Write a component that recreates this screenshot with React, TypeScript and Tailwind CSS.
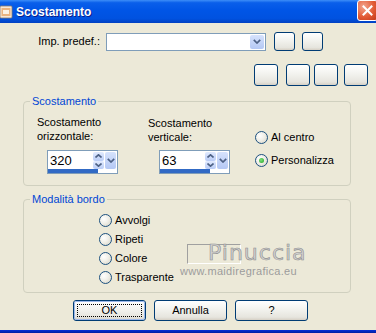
import React from 'react';

const font = { fontFamily: '"Liberation Sans", Arial, sans-serif' };

// XP style push button
const XpButton = ({ className = '', children = null, isDefault = false }: { className?: string; children?: React.ReactNode; isDefault?: boolean }) => (
  <div
    className={`flex items-center justify-center rounded-[3px] border border-[#003C74] bg-[linear-gradient(to_bottom,#FFFFFF_0%,#F4F4F0_40%,#E6E5DE_85%,#D6D0C5_100%)] text-[11px] text-black ${className}`}
  >
    {isDefault ? (
      <div className="flex h-full w-full items-center justify-center rounded-[2px] border border-[#9DB9EB]">
        <div className="flex h-[calc(100%-4px)] w-[calc(100%-4px)] items-center justify-center border border-dotted border-black">
          {children}
        </div>
      </div>
    ) : (
      children
    )}
  </div>
);

const Radio = ({ label, checked = false }: { label: string; checked?: boolean }) => (
  <div className="flex items-center gap-[3px] h-[13px]">
    <div className="flex h-[13px] w-[13px] items-center justify-center rounded-full border border-[#1C5180] bg-[radial-gradient(circle_at_35%_35%,#FFFFFF_0%,#F0EFE8_45%,#D4D1C2_100%)]">
      {checked && <div className="h-[5px] w-[5px] rounded-full bg-[radial-gradient(circle_at_40%_40%,#7BE27B,#21A121)]" />}
    </div>
    <span className="text-[11px] leading-[13px] text-black">{label}</span>
  </div>
);

const SpinArrows = () => (
  <div className="flex h-full">
    <div className="flex w-[11px] flex-col">
      <div className="flex flex-1 items-center justify-center rounded-[2px] bg-[linear-gradient(to_bottom,#E1EAFE,#B9CCF6)]">
        <svg width="7" height="4" viewBox="0 0 7 4"><path d="M0.5 3.5 L3.5 0.8 L6.5 3.5" fill="none" stroke="#4D6185" strokeWidth="1.6" /></svg>
      </div>
      <div className="flex flex-1 items-center justify-center rounded-[2px] bg-[linear-gradient(to_bottom,#E1EAFE,#B9CCF6)]">
        <svg width="7" height="4" viewBox="0 0 7 4"><path d="M0.5 0.5 L3.5 3.2 L6.5 0.5" fill="none" stroke="#4D6185" strokeWidth="1.6" /></svg>
      </div>
    </div>
    <div className="ml-[1px] flex w-[11px] items-center justify-center rounded-[2px] bg-[linear-gradient(to_bottom,#D6E2FC,#B4C8F4)]">
      <svg width="8" height="5" viewBox="0 0 8 5"><path d="M0.8 0.8 L4 4 L7.2 0.8" fill="none" stroke="#4D6185" strokeWidth="1.7" /></svg>
    </div>
  </div>
);

const SpinInput = ({ value }: { value: string }) => (
  <div className="flex h-[24px] w-[71px] flex-col border border-[#7F9DB9] bg-white">
    <div className="flex h-[18px] items-stretch pr-[1px] pt-[1px]">
      <span className="flex-1 pl-[2px] text-[13px] leading-[17px] text-black">{value}</span>
      <SpinArrows />
    </div>
    <div className="mt-auto h-[4px] w-[50px] bg-[#316AC5]" />
  </div>
);

const Group = ({ title, className = '', children }: { title: string; className?: string; children: React.ReactNode }) => (
  <div className={`relative ml-[23px] w-[328px] rounded-[4px] border border-[#D0D0BF] ${className}`}>
    <span className="absolute -top-[8px] left-[6px] bg-[#ECE9D8] px-[2px] text-[11px] leading-[14px] text-[#0046D5]">{title}</span>
    {children}
  </div>
);

export default function App() {
  return (
    <div className="flex h-[333px] w-[376px] flex-col overflow-hidden bg-[#ECE9D8]" style={font}>
      {/* title bar */}
      <div className="flex h-[23px] items-center bg-[linear-gradient(to_bottom,#3D8EF8_0%,#0A5FEA_12%,#0055E6_45%,#0052E0_80%,#0141C2_100%)]">
        <svg width="13" height="14" viewBox="0 0 13 14" className="ml-0">
          <rect x="0" y="1" width="12" height="12" rx="1" fill="#F6E6D6" stroke="#8A7A6A" strokeWidth="0.8" />
          <rect x="1.5" y="3" width="9" height="8" fill="#E9B27E" />
          <rect x="3" y="5" width="6" height="4" fill="#FBF1E4" />
        </svg>
        <span className="ml-[3px] text-[12px] font-bold text-white [text-shadow:1px_1px_0_#0A1E8A]">Scostamento</span>
        <div className="ml-auto mr-[-2px] mb-[2px] flex h-[21px] w-[21px] items-center justify-center rounded-[3px] border border-white bg-[radial-gradient(circle_at_30%_30%,#F2A58E,#E25A34_55%,#C1361A)]">
          <svg width="11" height="11" viewBox="0 0 11 11"><path d="M1.5 1.5 L9.5 9.5 M9.5 1.5 L1.5 9.5" stroke="white" strokeWidth="2" strokeLinecap="square" /></svg>
        </div>
      </div>

      {/* body */}
      <div className="flex flex-1 flex-col">
        {/* preset row */}
        <div className="mt-[9px] flex items-center">
          <span className="w-[100px] text-right text-[11px] text-black">Imp. predef.:</span>
          <div className="ml-[6px] flex h-[18px] w-[160px] items-center justify-end border border-[#7F9DB9] bg-white pr-[1px]">
            <div className="flex h-[14px] w-[14px] items-center justify-center rounded-[2px] bg-[linear-gradient(to_bottom,#D6E2FC,#B4C8F4)]">
              <svg width="8" height="5" viewBox="0 0 8 5"><path d="M0.8 0.8 L4 4 L7.2 0.8" fill="none" stroke="#4D6185" strokeWidth="1.7" /></svg>
            </div>
          </div>
          <XpButton className="ml-[8px] h-[19px] w-[21px]" />
          <XpButton className="ml-[7px] h-[19px] w-[21px]" />
        </div>

        {/* toolbar row */}
        <div className="mt-[13px] flex pl-[254px]">
          <XpButton className="h-[22px] w-[24px]" />
          <XpButton className="ml-[8px] h-[22px] w-[24px]" />
          <XpButton className="ml-[4px] h-[22px] w-[24px]" />
          <XpButton className="ml-[6px] h-[22px] w-[24px]" />
        </div>

        {/* Scostamento group */}
        <Group title="Scostamento" className="mt-[15px] h-[85px]">
          <div className="flex pl-[13px] pt-[13px]">
            <div className="w-[111px]">
              <div className="text-[11px] leading-[14px] text-black">Scostamento<br />orizzontale:</div>
              <div className="ml-[10px] mt-[7px]"><SpinInput value="320" /></div>
            </div>
            <div className="w-[107px]">
              <div className="pt-[1px] text-[11px] leading-[14px] text-black">Scostamento<br />verticale:</div>
              <div className="ml-[11px] mt-[6px]"><SpinInput value="63" /></div>
            </div>
            <div className="flex flex-col gap-[10px] pt-[16px]">
              <Radio label="Al centro" />
              <Radio label="Personalizza" checked />
            </div>
          </div>
        </Group>

        {/* Modalità bordo group */}
        <Group title="Modalità bordo" className="mt-[13px] h-[94px]">
          <div className="flex pl-[75px] pt-[14px]">
            <div className="flex w-[88px] flex-col gap-[6px]">
              <Radio label="Avvolgi" />
              <Radio label="Ripeti" />
              <Radio label="Colore" />
              <Radio label="Trasparente" />
            </div>
            <div className="relative mt-[30px] h-[20px] w-[54px] border border-t-[#A0A0A0] border-l-[#A0A0A0] border-b-white border-r-white">
              <div className="absolute left-[20px] top-[-2px] text-[22px] leading-[20px] tracking-[1px] text-[#D2D2D2] [-webkit-text-stroke:0.6px_#8E8E8E] [font-family:'DejaVu_Sans',sans-serif]">Pinuccia</div>
              <div className="absolute left-[-8px] top-[20px] whitespace-nowrap text-[11px] leading-[12px] tracking-[0.3px] text-[#9C9C9C]">www.maidiregrafica.eu</div>
            </div>
          </div>
        </Group>

        {/* dialog buttons */}
        <div className="mt-[7px] flex gap-[8px] pl-[73px]">
          <XpButton className="h-[21px] w-[73px]" isDefault>OK</XpButton>
          <XpButton className="h-[21px] w-[73px]">Annulla</XpButton>
          <XpButton className="h-[21px] w-[73px]">?</XpButton>
        </div>
      </div>

      {/* bottom frame */}
      <div className="h-[3px] bg-[linear-gradient(to_bottom,#0831D9,#001EA0)]" />
    </div>
  );
}
